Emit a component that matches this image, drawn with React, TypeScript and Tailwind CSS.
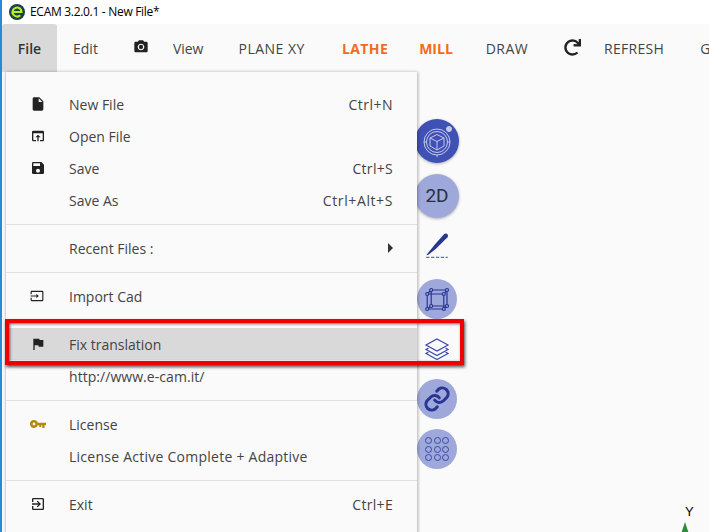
import { MdInsertDriveFile, MdOpenInBrowser, MdSave, MdPhotoCamera, MdInput, MdFlag, MdExitToApp } from 'react-icons/md'
import { FaRedo } from 'react-icons/fa'
import type { ReactNode } from 'react'

function Logo() {
  return (
    <svg width="16" height="16" viewBox="0 0 16 16" className="shrink-0">
      <circle cx="8" cy="8" r="8" fill="#1c3d4a" />
      <path d="M3.500 8h9a4.500 4.500 0 1 0-1.300 3.200" fill="none" stroke="#b5f01d" strokeWidth="2.200" />
    </svg>
  )
}

function KeyIcon() {
  return (
    <svg width="16" height="9" viewBox="0 0 16 9" fill="#b8860b">
      <path d="M4 0a4 4 0 0 1 3.800 2.800H16v2.400h-1.500V8h-2.200V5.200h-1V7H9.200V5.200H7.800A4 4 0 1 1 4 0zm0 2.600a1.400 1.400 0 1 0 0 2.800 1.400 1.400 0 0 0 0-2.800z" />
    </svg>
  )
}

function TopItem({ label, className = '' }: { label: string; className?: string }) {
  return <span className={`text-[14px] text-[#444] whitespace-nowrap ${className}`}>{label}</span>
}

function MenuItem({ icon, label, right, active, labelClass = '', rightClass = '' }: { icon?: ReactNode; label: string; right?: ReactNode; active?: boolean; labelClass?: string; rightClass?: string }) {
  return (
    <div className={`h-8 flex items-center text-[14px] text-[#444] ${active ? 'bg-[#d9d9d9]' : ''}`}>
      <span className="w-[63px] pl-[24px] flex items-center text-[#222] shrink-0">{icon}</span>
      <span className={`flex-1 whitespace-nowrap ${labelClass}`}>{label}</span>
      <span className={`pr-[24px] whitespace-nowrap ${rightClass}`}>{right}</span>
    </div>
  )
}

function Divider() {
  return <div className="h-px bg-[#e0e0e0] my-[7.5px]" />
}

function SideCircle({ children, className = '' }: { children: ReactNode; className?: string }) {
  return (
    <div className={`rounded-full flex items-center justify-center shrink-0 shadow-[0_1px_3px_rgba(0,0,0,0.3)] ${className}`}>
      {children}
    </div>
  )
}

export default function App() {
  return (
    <div className="relative w-[709px] h-[532px] overflow-hidden bg-[#fafafa] border-l-2 border-[#2b88d8] font-['Open_Sans','Noto_Sans',sans-serif]">
      {/* title bar */}
      <div className="h-6 bg-white flex items-center pl-[7px] gap-[5px] text-[12px] text-black">
        <Logo />
        <span className="whitespace-nowrap tracking-[-0.3px]">ECAM 3.2.0.1 - New File*</span>
      </div>

      {/* toolbar */}
      <div className="h-12 flex items-center overflow-hidden">
        <div className="w-[55px] h-12 shrink-0 bg-[#d9d9d9] rounded-t-[3px] flex items-center justify-center text-[14px] font-semibold text-[#333]">File</div>
        <TopItem label="Edit" className="ml-[16px]" />
        <MdPhotoCamera size={16} className="ml-[35px] text-[#222] shrink-0 -mt-[2px]" />
        <TopItem label="View" className="ml-[24px]" />
        <TopItem label="PLANE XY" className="ml-[35px] tracking-[0.5px]" />
        <TopItem label="LATHE" className="ml-[37px] font-bold text-[#f26b1d] tracking-[0.4px]" />
        <TopItem label="MILL" className="ml-[31px] font-bold text-[#f26b1d]" />
        <TopItem label="DRAW" className="ml-[33px] tracking-[0.4px]" />
        <FaRedo size={17} className="ml-[36px] text-[#222] shrink-0 -mt-[2px]" />
        <TopItem label="REFRESH" className="ml-[23px] tracking-[0.3px]" />
        <TopItem label="G" className="ml-[36px]" />
      </div>

      {/* side tools */}
      <div className="absolute left-[413px] top-[119px] w-[44px] flex flex-col items-center">
        <SideCircle className="w-11 h-11 bg-[#3f51b5]">
          <svg width="34" height="34" viewBox="0 0 34 34" fill="none" stroke="#c5cae9" strokeWidth="1">
            <circle cx="17" cy="18" r="13" />
            <circle cx="17" cy="18" r="10.5" />
            <path d="M17 10.5l7 3.5v8l-7 4-7-4v-8zM10 14l7 3.5 7-3.5M17 17.5V26M4 18h2M28 18h2M17 31v2" />
            <circle cx="29" cy="5" r="2.5" fill="#c5cae9" />
          </svg>
        </SideCircle>
        <SideCircle className="w-11 h-11 mt-[11px] bg-[#9fa8da] text-[19px] text-[#263238] font-['Roboto',sans-serif]">2D</SideCircle>
        <div className="h-8 mt-[11px] flex items-center justify-center">
          <svg width="28" height="28" viewBox="0 0 26 26" fill="none">
            <path d="M22 2.500c1.500 1 1.500 2.200.8 3.200L12 16.500 5 22l-2 .5 8-10L19.500 3c.8-.8 1.600-1 2.500-.5z" fill="#283593" />
            <path d="M3 24.500h20" stroke="#5c6bc0" strokeWidth="1" strokeDasharray="3 1.500" />
          </svg>
        </div>
        <SideCircle className="w-10 h-10 mt-[18px] bg-[#9fa8da] shadow-none">
          <svg width="30" height="30" viewBox="0 0 30 30" fill="none" stroke="#283593" strokeWidth="1.200">
            <path d="M9.200 6H25v16H9.200zM5.200 10h16.600v15H5.200zM9.200 6l-4 4M25 6l-3.200 4M25 22l-3.200 3M9.200 22l-4 3" />
            <g fill="#9fa8da">
              <circle cx="9.200" cy="6" r="1.500" /><circle cx="25" cy="6" r="1.500" /><circle cx="5.200" cy="10" r="1.500" /><circle cx="21.800" cy="10" r="1.500" />
              <circle cx="9.200" cy="22" r="1.500" /><circle cx="25" cy="22" r="1.500" /><circle cx="5.200" cy="25" r="1.500" /><circle cx="21.800" cy="25" r="1.500" />
            </g>
          </svg>
        </SideCircle>
        <div className="h-[38px] mt-[11px] flex items-center justify-center">
          <svg width="26" height="22" viewBox="0 0 26 22" fill="none" stroke="#3949ab" strokeWidth="1.200">
            <path d="M13 1l11 6-11 6L2 7z" />
            <path d="M4.500 10L2 11.500l11 6 11-6L21.500 10" />
            <path d="M4.500 14L2 15.500l11 6 11-6L21.500 14" />
          </svg>
        </div>
        <SideCircle className="w-10 h-10 mt-[11px] bg-[#9fa8da] shadow-none">
          <svg width="28" height="28" viewBox="0 0 24 24" fill="none" stroke="#283593" strokeWidth="2.600" strokeLinecap="round">
            <path d="M10 13a5 5 0 0 0 7.500.5l3-3a5 5 0 0 0-7-7l-1.700 1.700" />
            <path d="M14 11a5 5 0 0 0-7.500-.5l-3 3a5 5 0 0 0 7 7l1.700-1.700" />
          </svg>
        </SideCircle>
        <SideCircle className="w-10 h-10 mt-[10px] bg-[#9fa8da] shadow-none">
          <div className="grid grid-cols-3 gap-x-[1.500px] gap-y-[1.500px]">
            {Array.from({ length: 9 }).map((_, i) => (
              <span key={i} className="w-[7px] h-[7px] rounded-full border border-[#3949ab]" />
            ))}
          </div>
        </SideCircle>
      </div>

      {/* axis marker */}
      <span className="absolute left-[683px] top-[505px] text-[13px] leading-none text-black font-['Liberation_Sans',sans-serif]">Y</span>
      <div className="absolute left-[679px] top-[522px] w-0 h-0 border-x-[4px] border-x-transparent border-b-[12px] border-b-[#2e8b3d]" />

      {/* file menu */}
      <div className="absolute left-[3px] top-[72px] w-[412px] h-[470px] bg-[#fafafa] border-l border-[#d6d6d6] shadow-[1px_0_3px_rgba(0,0,0,0.3)] pt-4">
        <MenuItem icon={<MdInsertDriveFile size={16} />} label="New File" right="Ctrl+N" rightClass="tracking-[0.5px]" />
        <MenuItem icon={<MdOpenInBrowser size={16} />} label="Open File" />
        <MenuItem icon={<MdSave size={16} />} label="Save" right="Ctrl+S" rightClass="tracking-[0.3px]" />
        <MenuItem label="Save As" right="Ctrl+Alt+S" rightClass="tracking-[0.6px]" />
        <Divider />
        <MenuItem label="Recent Files :" right={<span className="block w-0 h-0 border-y-[5px] border-y-transparent border-l-[5px] border-l-[#333]" />} />
        <Divider />
        <MenuItem icon={<MdInput size={14} />} label="Import Cad" />
        <Divider />
        <MenuItem icon={<MdFlag size={16} />} label="Fix translation" active />
        <MenuItem label="http://www.e-cam.it/" labelClass="tracking-[0.05px]" />
        <Divider />
        <MenuItem icon={<KeyIcon />} label="License" />
        <MenuItem label="License Active Complete + Adaptive" labelClass="tracking-[0.25px]" />
        <Divider />
        <MenuItem icon={<MdExitToApp size={16} />} label="Exit" right="Ctrl+E" rightClass="tracking-[0.3px]" />
      </div>

      {/* red highlight annotation */}
      <div className="absolute left-[3px] top-[319px] w-[459px] h-[46px] border-[4px] border-[#f00000] shadow-[1px_2px_3px_rgba(0,0,0,0.7),inset_1px_1px_3px_rgba(0,0,0,0.6)]" />
    </div>
  )
}
